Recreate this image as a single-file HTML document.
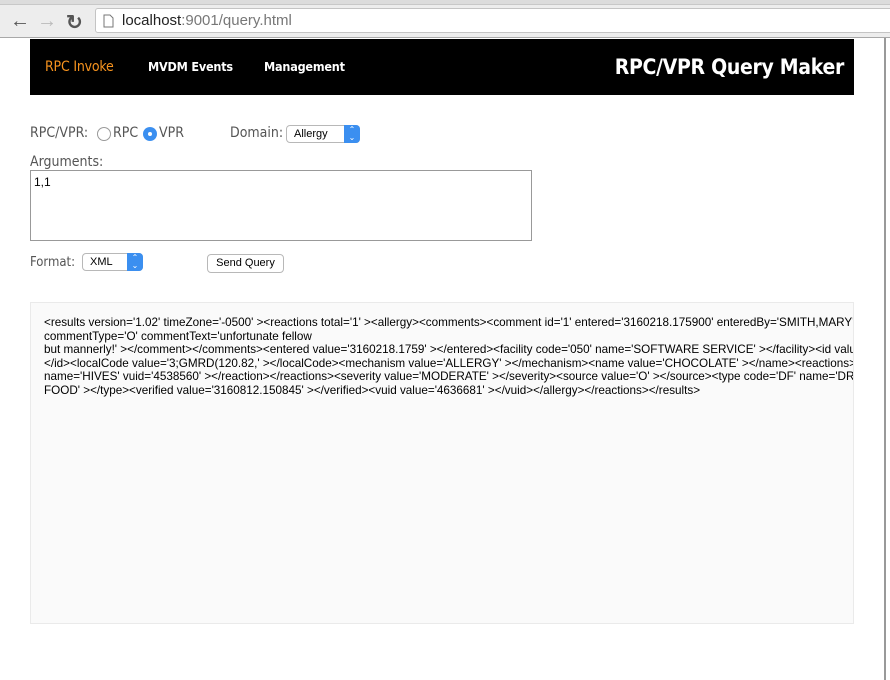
<!DOCTYPE html>
<html><head><meta charset="utf-8"><style>
*{box-sizing:border-box}
body{margin:0;width:890px;height:680px;overflow:hidden;background:#fff;font-family:"Liberation Sans",sans-serif;position:relative}
.chrome{position:absolute;left:0;top:0;width:890px;height:38px;background:#ededed;border-bottom:1px solid #a8a8a8}
.tabs{position:absolute;left:0;top:0;width:890px;height:5px;background:#dcdcdc;border-bottom:1px solid #c8c8c8}
.addr{position:absolute;left:95px;top:8px;width:800px;height:25px;background:#fff;border:1px solid #c4c4c4;border-radius:3px}
.addr span{position:absolute;left:26px;top:3px;font-size:15px;color:#222}
.nav{position:absolute;top:10px;font-size:20px;font-weight:bold}
.vline{position:absolute;left:884px;top:38px;width:2px;height:642px;background:#999}
.hdr{position:absolute;left:30px;top:39px;width:824px;height:56px;background:#000}
.hdr a{position:absolute;top:20px;font-size:12.5px;font-weight:bold;color:#fff;font-family:"DejaVu Sans Condensed","DejaVu Sans",sans-serif;letter-spacing:-0.2px}
.hdr .t{position:absolute;right:10px;top:16px;font-size:21px;font-weight:bold;color:#fff;font-family:"DejaVu Sans Condensed","DejaVu Sans",sans-serif;letter-spacing:-0.3px}
.lbl{position:absolute;font-size:14px;color:#555;font-family:"DejaVu Sans Condensed","DejaVu Sans",sans-serif}
.sel{position:absolute;height:18px;border:1px solid #b8b8b8;border-radius:4px;background:#fff;font-size:11px;color:#000;padding:2px 0 0 7px}
.sel i{position:absolute;right:-1px;top:-1px;width:16px;height:18px;background:#3b8ff0;border-radius:0 4px 4px 0;color:#fff;font-style:normal;font-size:8px;text-align:center;line-height:8px;padding-top:1px}
.ta{position:absolute;left:30px;top:170px;width:502px;height:71px;border:1px solid #999;font-size:12px;padding:4px 3px}
.btn{position:absolute;left:207px;top:254px;width:77px;height:19px;border:1px solid #b8b8b8;border-radius:4px;background:#fff;font-size:11px;text-align:center;line-height:17px}
.res{position:absolute;left:30px;top:302px;width:824px;height:322px;background:#fafafa;border:1px solid #eaeaea;overflow:hidden}
.res pre{margin:0;position:absolute;left:13px;top:13px;font-family:"Liberation Sans",sans-serif;font-size:11.7px;line-height:13.5px;color:#000;white-space:pre}
</style></head><body>
<div class="chrome"><div class="tabs"></div>
<span class="nav" style="left:10px;color:#555">&#8592;</span>
<span class="nav" style="left:37px;color:#bbb">&#8594;</span>
<span class="nav" style="left:66px;color:#555">&#8635;</span>
<div class="addr"><svg style="position:absolute;left:7px;top:5px" width="11" height="14"><path d="M1 1H7L10 4V13H1Z" fill="#fff" stroke="#777"/></svg><span>localhost<span style="position:static;color:#777">:9001/query.html</span></span></div>
</div>
<div class="vline"></div>
<div class="hdr">
<a style="left:15px;color:#f7931e;font-weight:normal;font-size:14px">RPC Invoke</a>
<a style="left:118px">MVDM Events</a>
<a style="left:234px">Management</a>
<span class="t">RPC/VPR Query Maker</span>
</div>
<span class="lbl" style="left:30px;top:125px">RPC/VPR:</span>
<span style="position:absolute;left:97px;top:127px;width:14px;height:14px;border:1px solid #999;border-radius:50%"></span>
<span class="lbl" style="left:113px;top:125px">RPC</span>
<span style="position:absolute;left:143px;top:127px;width:14px;height:14px;background:#3b8ff0;border-radius:50%"><span style="position:absolute;left:5px;top:5px;width:4px;height:4px;background:#fff;border-radius:50%"></span></span>
<span class="lbl" style="left:159px;top:125px">VPR</span>
<span class="lbl" style="left:230px;top:125px">Domain:</span>
<div class="sel" style="left:286px;top:125px;width:74px">Allergy<i>&#8963;<br>&#8964;</i></div>
<span class="lbl" style="left:30px;top:154px">Arguments:</span>
<div class="ta">1,1</div>
<span class="lbl" style="left:30px;top:255px;font-size:13px">Format:</span>
<div class="sel" style="left:82px;top:253px;width:61px">XML<i>&#8963;<br>&#8964;</i></div>
<div class="btn">Send Query</div>
<div class="res"><pre>&lt;results version='1.02' timeZone='-0500' &gt;&lt;reactions total='1' &gt;&lt;allergy&gt;&lt;comments&gt;&lt;comment id='1' entered='3160218.175900' enteredBy='SMITH,MARY'
commentType='O' commentText='unfortunate fellow
but mannerly!' &gt;&lt;/comment&gt;&lt;/comments&gt;&lt;entered value='3160218.1759' &gt;&lt;/entered&gt;&lt;facility code='050' name='SOFTWARE SERVICE' &gt;&lt;/facility&gt;&lt;id value
&lt;/id&gt;&lt;localCode value='3;GMRD(120.82,' &gt;&lt;/localCode&gt;&lt;mechanism value='ALLERGY' &gt;&lt;/mechanism&gt;&lt;name value='CHOCOLATE' &gt;&lt;/name&gt;&lt;reactions&gt;&lt;
name='HIVES' vuid='4538560' &gt;&lt;/reaction&gt;&lt;/reactions&gt;&lt;severity value='MODERATE' &gt;&lt;/severity&gt;&lt;source value='O' &gt;&lt;/source&gt;&lt;type code='DF' name='DRUG,
FOOD' &gt;&lt;/type&gt;&lt;verified value='3160812.150845' &gt;&lt;/verified&gt;&lt;vuid value='4636681' &gt;&lt;/vuid&gt;&lt;/allergy&gt;&lt;/reactions&gt;&lt;/results&gt;</pre></div>
</body></html>
